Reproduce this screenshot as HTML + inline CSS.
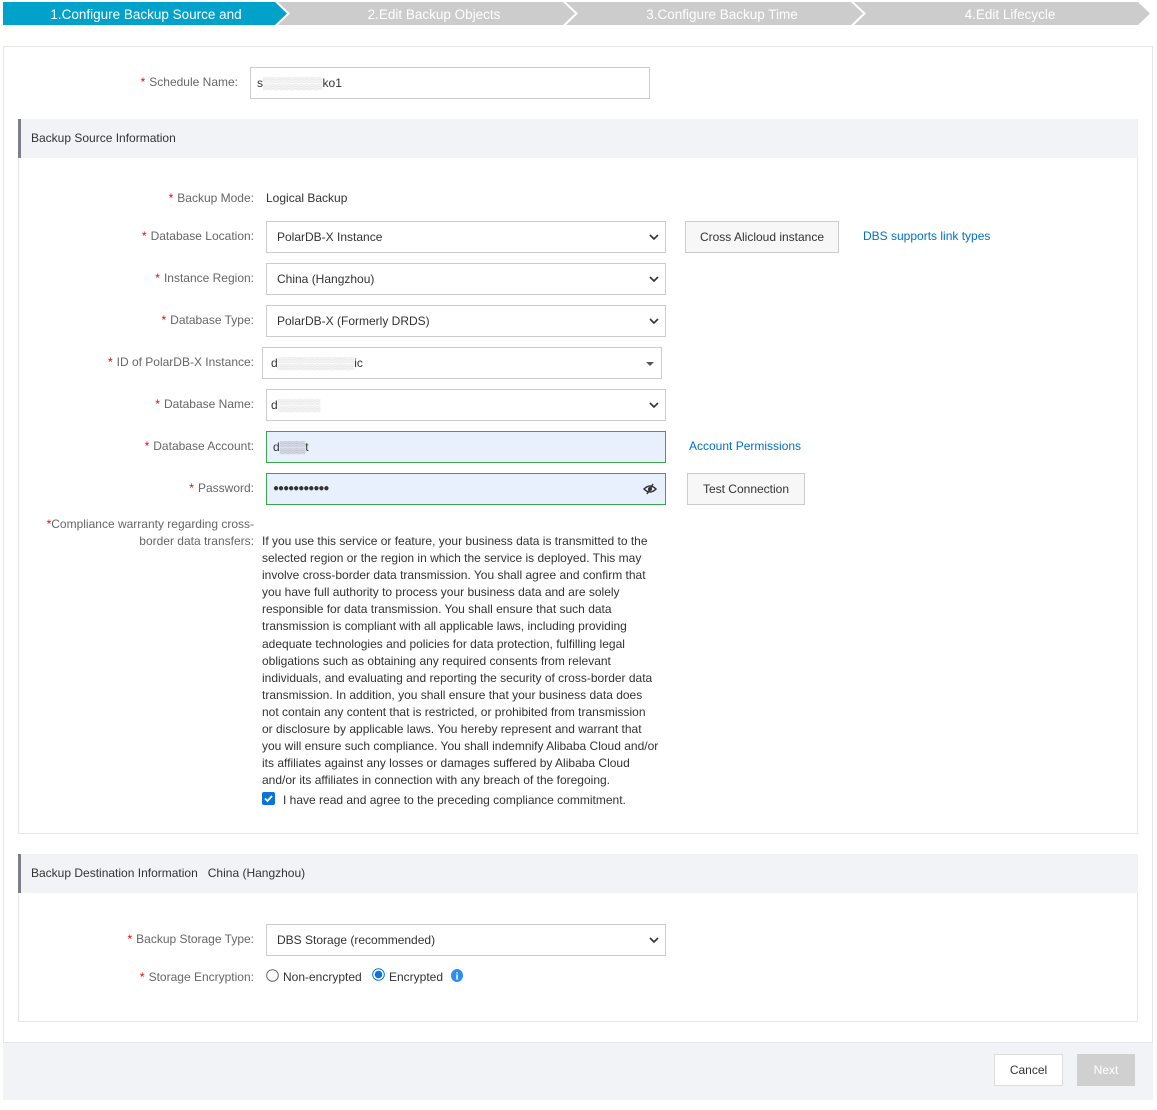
<!DOCTYPE html>
<html><head><meta charset="utf-8"><style>
body{margin:0;width:1157px;height:1110px;background:#fff;font-family:"Liberation Sans",sans-serif;font-size:12px;color:#333;position:relative;overflow:hidden}
.a{position:absolute}
.lbl{position:absolute;text-align:right;color:#666;white-space:nowrap}
.lbl b{color:#e00;font-weight:normal;margin-right:4px}
.sel{position:absolute;border:1px solid #ccc;background:#fff;box-sizing:border-box;height:32px;line-height:30px;padding-left:10px;color:#333}
.sel svg{position:absolute;right:6px;top:11px}
.btn{position:absolute;border:1px solid #ccc;background:#f7f7f7;box-sizing:border-box;height:32px;line-height:30px;text-align:center;color:#333}
.hdr{position:absolute;left:18px;width:1120px;height:39px;background:#f2f3f7;border-left:3px solid #7d7d8c;box-sizing:border-box;line-height:39px;padding-left:10px;color:#333}
.lnk{position:absolute;color:#0070cc}
</style></head><body>
<svg class="a" style="left:0;top:0" width="1157" height="28">
<polygon points="3,2 275,2 287,13.5 275,25 3,25" fill="#00a2ca"/>
<polygon points="278,2 563,2 575,13.5 563,25 278,25 290,13.5" fill="#cccccc"/>
<polygon points="566,2 851,2 863,13.5 851,25 566,25 578,13.5" fill="#cccccc"/>
<polygon points="854,2 1138,2 1150,13.5 1138,25 854,25 866,13.5" fill="#cccccc"/>
<g font-family="Liberation Sans,sans-serif" font-size="13.5" fill="#fff" text-anchor="middle">
<text x="146" y="19">1.Configure Backup Source and</text>
<text x="434" y="19">2.Edit Backup Objects</text>
<text x="722" y="19">3.Configure Backup Time</text>
<text x="1010" y="19">4.Edit Lifecycle</text></g>
</svg>
<div class="a" style="left:3px;top:46px;width:1150px;height:1053px;border:1px solid #e3e6ea;box-sizing:border-box"></div>
<div class="lbl" style="right:919px;top:75px"><b>*</b>Schedule Name:</div>
<div class="sel" style="left:250px;top:67px;width:400px;padding-left:6px">s<span style="color:#ccc">▒▒▒▒▒▒▒</span>ko1</div>

<div class="a" style="left:18px;top:119px;width:1120px;height:715px;border:1px solid #e3e6ea;box-sizing:border-box"></div>
<div class="hdr" style="top:119px">Backup Source Information</div>

<div class="lbl" style="right:903px;top:191px"><b>*</b>Backup Mode:</div>
<div class="a" style="left:266px;top:191px">Logical Backup</div>

<div class="lbl" style="right:903px;top:229px"><b>*</b>Database Location:</div>
<div class="sel" style="left:266px;top:221px;width:400px">PolarDB-X Instance<svg width="10" height="8"><path d="M1 2l4 4 4-4" stroke="#333" stroke-width="1.6" fill="none"/></svg></div>
<div class="btn" style="left:685px;top:221px;width:154px">Cross Alicloud instance</div>
<div class="lnk" style="left:863px;top:229px">DBS supports link types</div>

<div class="lbl" style="right:903px;top:271px"><b>*</b>Instance Region:</div>
<div class="sel" style="left:266px;top:263px;width:400px">China (Hangzhou)<svg width="10" height="8"><path d="M1 2l4 4 4-4" stroke="#333" stroke-width="1.6" fill="none"/></svg></div>

<div class="lbl" style="right:903px;top:313px"><b>*</b>Database Type:</div>
<div class="sel" style="left:266px;top:305px;width:400px">PolarDB-X (Formerly DRDS)<svg width="10" height="8"><path d="M1 2l4 4 4-4" stroke="#333" stroke-width="1.6" fill="none"/></svg></div>

<div class="lbl" style="right:903px;top:355px"><b>*</b>ID of PolarDB-X Instance:</div>
<div class="sel" style="left:262px;top:347px;width:400px;padding-left:8px">d<span style="color:#ccc">▒▒▒▒▒▒▒▒▒</span>ic<svg width="10" height="8"><path d="M1 3h8l-4 4z" fill="#555"/></svg></div>

<div class="lbl" style="right:903px;top:397px"><b>*</b>Database Name:</div>
<div class="sel" style="left:266px;top:389px;width:400px;padding-left:4px">d<span style="color:#ccc">▒▒▒▒▒</span><svg width="10" height="8"><path d="M1 2l4 4 4-4" stroke="#333" stroke-width="1.6" fill="none"/></svg></div>

<div class="lbl" style="right:903px;top:439px"><b>*</b>Database Account:</div>
<div class="sel" style="left:266px;top:431px;width:400px;border-color:#3aa64a;background:#e8f0fe;padding-left:6px">d<span style="color:#888">▒▒▒</span>t</div>
<div class="lnk" style="left:689px;top:439px">Account Permissions</div>

<div class="lbl" style="right:903px;top:481px"><b>*</b>Password:</div>
<div class="sel" style="left:266px;top:473px;width:400px;border-color:#3aa64a;background:#e8f0fe;padding-left:6px;font-size:10px;letter-spacing:-1px">●●●●●●●●●●●<svg width="14" height="12" style="top:9px;right:8px"><path d="M1 6q6-6 12 0q-6 6-12 0z" stroke="#333" fill="none" stroke-width="1.5"/><circle cx="7" cy="6" r="2" fill="#333"/><path d="M10 1L4 11" stroke="#333" stroke-width="1.5"/></svg></div>
<div class="btn" style="left:687px;top:473px;width:118px">Test Connection</div>

<div class="lbl" style="right:903px;top:516px;line-height:17px"><b style="margin-right:0">*</b>Compliance warranty regarding cross-<br>border data transfers:</div>
<div class="a" style="left:262px;top:533px;line-height:17.1px;color:#333;white-space:nowrap">If you use this service or feature, your business data is transmitted to the<br>selected region or the region in which the service is deployed. This may<br>involve cross-border data transmission. You shall agree and confirm that<br>you have full authority to process your business data and are solely<br>responsible for data transmission. You shall ensure that such data<br>transmission is compliant with all applicable laws, including providing<br>adequate technologies and policies for data protection, fulfilling legal<br>obligations such as obtaining any required consents from relevant<br>individuals, and evaluating and reporting the security of cross-border data<br>transmission. In addition, you shall ensure that your business data does<br>not contain any content that is restricted, or prohibited from transmission<br>or disclosure by applicable laws. You hereby represent and warrant that<br>you will ensure such compliance. You shall indemnify Alibaba Cloud and/or<br>its affiliates against any losses or damages suffered by Alibaba Cloud<br>and/or its affiliates in connection with any breach of the foregoing.</div>
<svg class="a" style="left:262px;top:792px" width="13" height="13"><rect width="13" height="13" rx="2" fill="#0a74da"/><path d="M3 6.5l2.5 2.5 4.5-5" stroke="#fff" stroke-width="1.8" fill="none"/></svg>
<div class="a" style="left:283px;top:793px">I have read and agree to the preceding compliance commitment.</div>

<div class="a" style="left:18px;top:854px;width:1120px;height:168px;border:1px solid #e3e6ea;box-sizing:border-box"></div>
<div class="hdr" style="top:854px">Backup Destination Information&nbsp;&nbsp;&nbsp;China (Hangzhou)</div>
<div class="lbl" style="right:903px;top:932px"><b>*</b>Backup Storage Type:</div>
<div class="sel" style="left:266px;top:924px;width:400px">DBS Storage (recommended)<svg width="10" height="8"><path d="M1 2l4 4 4-4" stroke="#333" stroke-width="1.6" fill="none"/></svg></div>
<div class="lbl" style="right:903px;top:970px"><b>*</b>Storage Encryption:</div>
<svg class="a" style="left:266px;top:969px" width="13" height="13"><circle cx="6.5" cy="6.5" r="5.8" fill="#fff" stroke="#666"/></svg>
<div class="a" style="left:283px;top:970px">Non-encrypted</div>
<svg class="a" style="left:372px;top:968px" width="13" height="13"><circle cx="6.5" cy="6.5" r="5.8" fill="#fff" stroke="#0a74da"/><circle cx="6.5" cy="6.5" r="3.8" fill="#0a74da"/></svg>
<div class="a" style="left:389px;top:970px">Encrypted</div>
<svg class="a" style="left:451px;top:969px" width="12" height="13"><ellipse cx="6" cy="6.5" rx="6" ry="6.5" fill="#2d8cf0"/><text x="6" y="10.5" fill="#fff" font-size="10" font-weight="bold" text-anchor="middle" font-family="Liberation Serif">i</text></svg>

<div class="a" style="left:3px;top:1042px;width:1150px;height:57px;background:#f2f3f7;border-top:1px solid #e3e6ea"></div>
<div class="btn" style="left:994px;top:1054px;width:69px;background:#fff;border-color:#ddd">Cancel</div>
<div class="btn" style="left:1077px;top:1054px;width:58px;background:#d0d0d0;border-color:#d0d0d0;color:#fff">Next</div>
</body></html>
